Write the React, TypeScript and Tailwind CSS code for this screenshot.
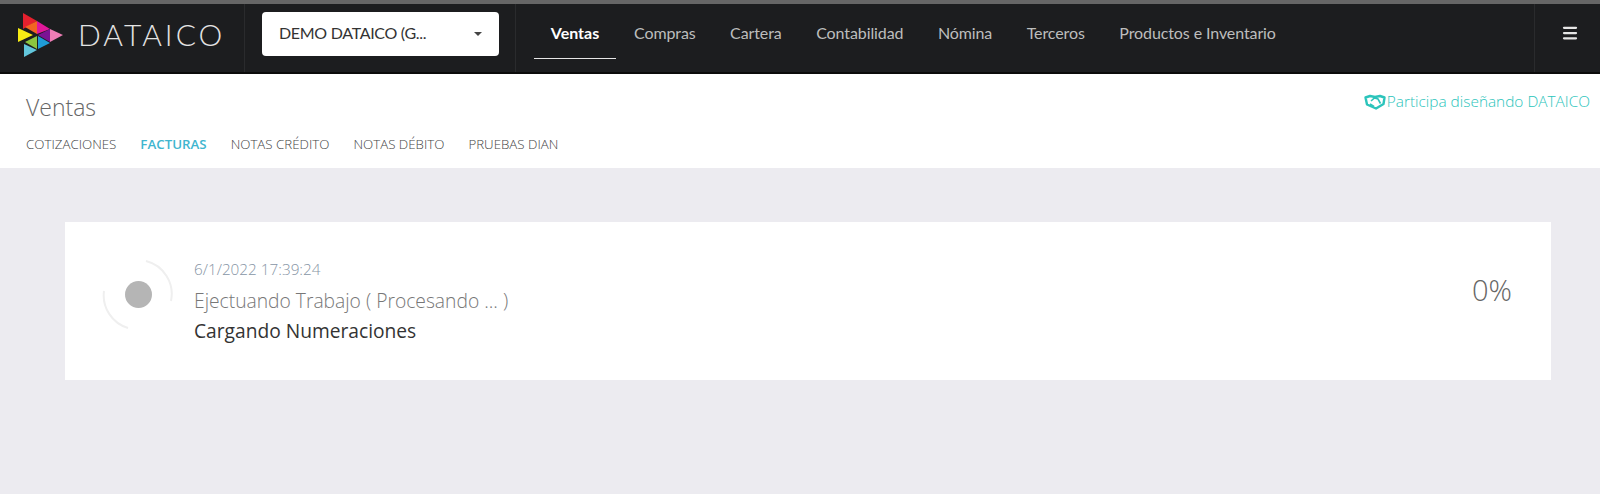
import React from "react";
import { Menu } from "lucide-react";

const navItems = ["Compras", "Cartera", "Contabilidad", "Nómina", "Terceros", "Productos e Inventario"];
const subItems = ["NOTAS CRÉDITO", "NOTAS DÉBITO", "PRUEBAS DIAN"];

function Logo() {
  return (
    <svg width="46" height="46" viewBox="17 12 46 46" className="shrink-0">
      <polygon points="22,13 36,21 22,29" fill="#e5202e" />
      <polygon points="36,21 36,34 24,27" fill="#f26522" />
      <polygon points="36,21 49,29 36,34" fill="#e0189a" />
      <polygon points="49,29 49,42 37,35" fill="#7b1394" />
      <polygon points="49,29 62,35 49,42" fill="#ee7db5" />
      <polygon points="36,36 36,49 24,42" fill="#8cc63f" />
      <polygon points="37,36 49,43 37,49" fill="#1f9bd7" />
      <polygon points="23,44 36,50 23,57" fill="#62c6dc" />
      <polygon points="17,28 32,35 17,42" fill="#f6eb14" />
    </svg>
  );
}

function HandshakeIcon() {
  return (
    <svg width="22" height="16" viewBox="0 0 22 16" fill="none" stroke="currentColor" className="shrink-0 mt-[2px]">
      <path d="M1.5 3.5 L6 2 L11 3 L16 2 L20.5 3.5 L19.5 10 L12 14.5 L3 10.5 Z" strokeWidth="2.4" strokeLinejoin="round" />
      <path d="M7 7 L10.5 4 L14 5 L16.5 9.5 M6 10 L10 12.5" strokeWidth="1.6" />
    </svg>
  );
}

function Spinner() {
  return (
    <div className="relative w-[72px] h-[72px] flex items-center justify-center shrink-0 -mt-[10px]">
      <svg width="72" height="72" viewBox="0 0 72 72" className="absolute inset-0">
        <path d="M44 3 A34 34 0 0 1 69 43" fill="none" stroke="#efefef" strokeWidth="2" />
        <path d="M26 70 A34 34 0 0 1 2 33" fill="none" stroke="#efefef" strokeWidth="2" />
      </svg>
      <div className="w-[27px] h-[27px] rounded-full bg-[#b5b5b5]" />
    </div>
  );
}

export default function App() {
  return (
    <div className="w-[1600px] h-[494px] flex flex-col bg-[#ecebf0] font-['Open_Sans',sans-serif] overflow-hidden">
      <div className="h-[4px] bg-[#666666]" />
      {/* Navbar */}
      <div className="h-[70px] flex items-stretch bg-[#1c1d1f] border-b-2 border-[#0b0b0b] font-['Lato',sans-serif]">
        <div className="w-[245px] flex items-center pl-[18px] pb-[6px] border-r border-[#2a2b2d]">
          <Logo />
          <span className="ml-[14px] -mt-[2px] text-[30px] font-light tracking-[3px] text-[#e4e4e4]">DATAICO</span>
        </div>
        <div className="w-[271px] flex items-center pl-[17px] pb-[8px] border-r border-[#2a2b2d]">
          <div className="w-[237px] h-[44px] bg-white rounded-[4px] flex items-center justify-between pl-[17px] pr-[17px]">
            <span className="text-[16px] text-[#333] tracking-[-0.3px] -mt-[3px]">DEMO DATAICO (G...</span>
            <span className="w-0 h-0 border-x-[4px] border-x-transparent border-t-[4px] border-t-[#444]" />
          </div>
        </div>
        <div className="flex-1 flex items-stretch pl-[18px]">
          <div className="w-[82px] flex items-center justify-center relative pb-[10px] text-[16px] font-bold text-white">
            Ventas
            <div className="absolute left-0 right-0 bottom-[13px] h-px bg-[#e6e6e6]" />
          </div>
          <div className="flex items-center gap-[34.5px] ml-[18px] pb-[10px] text-[16px] tracking-[-0.1px] text-[#bdbdbd]">
            {navItems.map((item) => (
              <span key={item}>{item}</span>
            ))}
          </div>
        </div>
        <div className="w-[66px] flex items-center justify-center pb-[10px] border-l border-[#2a2b2d] text-[#e6e6e6] pl-[5px]">
          <Menu size={18} strokeWidth={3} />
        </div>
      </div>
      {/* Sub header */}
      <div className="h-[94px] bg-white flex justify-between pl-[26px] pr-[10px]">
        <div className="flex flex-col">
          <div className="mt-[18px] text-[23px] font-light leading-[30px] text-[#666]">Ventas</div>
          <div className="mt-[13px] flex gap-[24px] text-[13.3px] font-light text-[#444] leading-[18px]">
            <span>COTIZACIONES</span>
            <span className="font-semibold text-[#3fb6cf]">FACTURAS</span>
            {subItems.map((item) => (
              <span key={item}>{item}</span>
            ))}
          </div>
        </div>
        <div className="mt-[18px] flex items-start gap-[1px] text-[15.4px] font-light leading-[20px] text-[#2bc4bb]">
          <HandshakeIcon />
          <span>Participa diseñando DATAICO</span>
        </div>
      </div>
      {/* Job card */}
      <div className="mt-[54px] ml-[65px] mr-[49px] h-[158px] bg-white flex items-center justify-between pl-[37px] pr-[39px]">
        <div className="flex items-center gap-[20px] -mt-[4px]">
          <Spinner />
          <div className="flex flex-col mt-[4px]">
            <span className="text-[15.3px] font-light leading-[20px] text-[#8795a5]">6/1/2022 17:39:24</span>
            <span className="mt-[9px] text-[19.25px] font-light leading-[26px] text-[#777]">Ejectuando Trabajo ( Procesando ... )</span>
            <span className="mt-[4px] text-[19.2px] leading-[26px] text-[#333]">Cargando Numeraciones</span>
          </div>
        </div>
        <span className="text-[29px] font-light text-[#666] -mt-[22px]">0%</span>
      </div>
    </div>
  );
}
